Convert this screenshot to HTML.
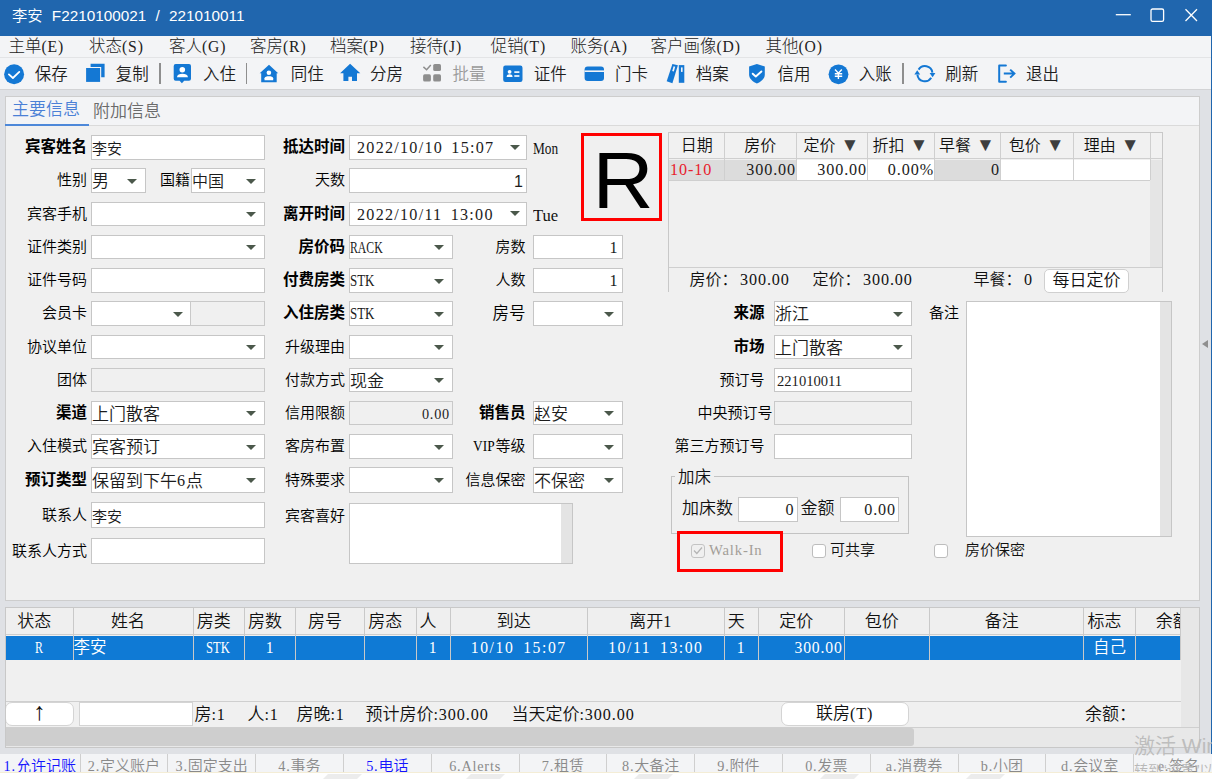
<!DOCTYPE html>
<html lang="zh-CN"><head><meta charset="utf-8"><title>李安 F2210100021 / 221010011</title>
<style>
*{box-sizing:border-box;margin:0;padding:0}
html,body{width:1212px;height:779px;overflow:hidden;background:#fff}
body{font-family:"Liberation Sans","Noto Sans CJK SC",sans-serif;color:#111;}
#w{font-weight:350;position:relative;width:1212px;height:779px;overflow:hidden;background:#dfe1e5}
#w div,#w span.a,#w svg{position:absolute}
.m{display:inline-block;font-family:"Liberation Serif","Noto Serif CJK SC",serif;white-space:nowrap;text-align:left;transform-origin:0 50%;vertical-align:baseline}
.n{font-family:"Liberation Serif","Noto Serif CJK SC",serif;font-size:.95em;letter-spacing:.055em}
.i .n,.i .m{position:relative;top:-1px}
.t{white-space:nowrap}
.l{white-space:nowrap;text-align:right;font-size:15px;line-height:24px;height:24px;color:#000}
.b{font-weight:700;font-size:15.5px !important}
.i{background:#fff;border:1px solid #c6c6c6;font-size:17px;line-height:22px;white-space:nowrap;overflow:hidden;padding-left:0;color:#1c1c1c}
.i.d{background:#f0f0f0;border-color:#c9c9c9}
.i.r{text-align:right;padding-right:2px}
.ar{width:0;height:0;border-left:5.5px solid transparent;border-right:5.5px solid transparent;border-top:5.6px solid #4b584b}
.mn{top:36px;height:22px;line-height:21px;font-size:16.5px;white-space:nowrap;color:#222;font-weight:300}
.tb{top:62px;height:24px;line-height:24px;font-size:16.5px;white-space:nowrap;color:#1e1e1e;font-weight:350}
.sep{top:63px;width:1.5px;height:21px;background:#8e8e8e}
.h{top:0;height:26px;line-height:26px;text-align:center;white-space:nowrap}
.c{top:0;height:24px;line-height:24px;white-space:nowrap;overflow:hidden}
.vs{top:0;width:1px;background:#cfcfcf}
.bt{top:753.5px;height:18px;width:88px;background:#f3f4f6;border-left:1px solid #cfcfcf;font-size:15px;line-height:23px;text-align:center;color:#8a8a8a;overflow:hidden;white-space:nowrap}
.cb{width:14px;height:14px;background:#fff;border:1px solid #bdbdbd;border-radius:3px}
</style></head>
<body><div id="w">
<div style="left:0;top:0;width:1212px;height:36px;background:#2066ae"></div>
<div class="t" style="left:12px;top:0;height:32px;line-height:32px;font-size:15.3px;word-spacing:5px;color:#fff">李安 F2210100021 / 221010011</div>
<svg style="left:1110px;top:4px" width="96" height="24" viewBox="0 0 96 24" fill="none" stroke="#fff" stroke-width="1.3"><path d="M5.8 10.7H20.8"/><rect x="41" y="5" width="12.6" height="12.4" rx="1.6"/><path d="M75.5 5.3L87 17M87 5.3L75.5 17"/></svg>
<div style="left:0;top:36px;width:1212px;height:22px;background:#f3f4f6;border-bottom:1px solid #e3e4e6"></div>
<div class="mn" style="left:8.5px">主单<span class="n">(E)</span></div>
<div class="mn" style="left:89px">状态<span class="n">(S)</span></div>
<div class="mn" style="left:169px">客人<span class="n">(G)</span></div>
<div class="mn" style="left:250px">客房<span class="n">(R)</span></div>
<div class="mn" style="left:330px">档案<span class="n">(P)</span></div>
<div class="mn" style="left:410px">接待<span class="n">(J)</span></div>
<div class="mn" style="left:490.5px">促销<span class="n">(T)</span></div>
<div class="mn" style="left:570.5px">账务<span class="n">(A)</span></div>
<div class="mn" style="left:650.5px">客户画像<span class="n">(D)</span></div>
<div class="mn" style="left:765.5px">其他<span class="n">(O)</span></div>
<div style="left:0;top:58px;width:1212px;height:32px;background:#f3f4f6;border-bottom:1.5px solid #d2d3d5"></div>
<div class="tb" style="left:34.7px">保存</div>
<div class="tb" style="left:115.8px">复制</div>
<div class="tb" style="left:203px">入住</div>
<div class="tb" style="left:290.8px">同住</div>
<div class="tb" style="left:370px">分房</div>
<div class="tb" style="left:452.5px;color:#9a9a9a">批量</div>
<div class="tb" style="left:533.7px">证件</div>
<div class="tb" style="left:615px">门卡</div>
<div class="tb" style="left:695.8px">档案</div>
<div class="tb" style="left:777.5px">信用</div>
<div class="tb" style="left:858.7px">入账</div>
<div class="tb" style="left:945.3px">刷新</div>
<div class="tb" style="left:1026px">退出</div>
<div class="sep" style="left:159px"></div>
<div class="sep" style="left:245.5px"></div>
<div class="sep" style="left:902px"></div>
<svg style="left:0;top:58px" width="1212" height="31" viewBox="0 58 1212 31" fill="#1478d4">
<circle cx="14.1" cy="74.2" r="10"/><path d="M8.9 74.4L12.9 78L19.3 71.9" fill="none" stroke="#fff" stroke-width="1.8" stroke-linecap="round" stroke-linejoin="round"/>
<path d="M90.6 63.7H104.6V77.3H101.2V66.9H90.6Z"/><rect x="86.1" y="68" width="14" height="13.9"/>
<path d="M175.7 64H189a2 2 0 0 1 2 2V78.8a2 2 0 0 1 -2 2H184.2L181.9 83.3L179.6 80.8H175.7a2 2 0 0 1 -2 -2V66a2 2 0 0 1 2 -2Z"/><circle cx="182.3" cy="69.7" r="2.8" fill="#fff"/><path d="M176.9 77.2C177.3 74.6 179.6 73.8 182.4 73.8S187.6 74.6 188 77.2Z" fill="#fff"/>
<path d="M269 64.8L278.2 73.3H276.7V82.3H261.2V73.3H259.7Z"/><circle cx="268.9" cy="72.7" r="2.3" fill="#fff"/><path d="M264.5 80.2V78.3C264.8 76.6 266.6 76.2 268.9 76.2S273 76.6 273.2 78.3V80.2Z" fill="#fff"/>
<path d="M350.1 63.8L360.3 73.3H357V81H352V76.8H348.4V81H343.4V73.3H340.1Z"/>
<g fill="#8e8e8e"><rect x="433.2" y="64" width="7.8" height="7" rx="1.6"/><rect x="423.1" y="74.3" width="7.8" height="7.3" rx="1.6"/><rect x="433.2" y="74.3" width="7.8" height="7.3" rx="1.6"/><path d="M423.4 66.9L426.6 69.8L430.8 65.1" fill="none" stroke="#8e8e8e" stroke-width="1.5"/></g>
<rect x="503.2" y="65.5" width="19.3" height="16.5" rx="2.2"/><circle cx="509.6" cy="71.8" r="1.9" fill="#fff"/><path d="M506.6 76.9C506.8 74.9 508 74.3 509.6 74.3S512.4 74.9 512.6 76.9Z" fill="#fff"/><rect x="514.3" y="71.3" width="5.1" height="1.6" fill="#fff"/><rect x="514.3" y="75.2" width="5.1" height="1.6" fill="#fff"/>
<rect x="584.6" y="66.4" width="19.4" height="14.6" rx="3"/><rect x="584.6" y="70.4" width="19.4" height="1.6" fill="#f3f4f6"/>
<path d="M672.4 64.1L677.9 65.2L672.4 83.2L666.7 81.3Z"/><path d="M673.6 66.3L675.2 66.7L673.8 71.4L672.2 71Z" fill="#f3f4f6"/><rect x="678.8" y="65.1" width="5.5" height="17.7"/><rect x="681" y="67.4" width="1.6" height="4.5" fill="#f3f4f6"/>
<path d="M756.9 64L764.8 66.4V74.5C764.8 78.6 761.2 81.7 756.9 83.6C752.6 81.7 749.1 78.6 749.1 74.5V66.4Z"/><path d="M752.7 73.7L755.8 76.5L761.4 71.5" fill="none" stroke="#fff" stroke-width="1.9" stroke-linecap="round" stroke-linejoin="round"/>
<circle cx="838.5" cy="74.3" r="9.9"/><path d="M835 69.6L838.4 73.2L841.8 69.6M838.4 73V79M834.8 73.7H842.2M834.8 76.2H842.2" fill="none" stroke="#fff" stroke-width="1.4"/>
<g fill="none" stroke="#1478d4" stroke-width="2"><path d="M918.6 69.6A7.5 7.5 0 0 1 932.4 72.6"/><path d="M931.2 77.8A7.5 7.5 0 0 1 917.4 74.6"/></g><path d="M929.6 73H935.4L932.6 77.2Z"/><path d="M914.4 74.4H920.2L917.2 70.2Z"/>
<g fill="none" stroke="#1478d4" stroke-width="2"><path d="M1005.9 65.5H999.2V81.8H1005.9" stroke-linejoin="round" stroke-linecap="round"/><path d="M1003.8 73.6H1014M1010.2 69.6L1014.4 73.6L1010.2 77.6"/></g>
</svg>
<div style="left:1210.6px;top:0;width:1.4px;height:772px;background:#2066ae"></div>
<div style="left:1202px;top:340px;width:0;height:0;border-top:4px solid transparent;border-bottom:4px solid transparent;border-right:6px solid #8f8f8f"></div>
<div style="left:5px;top:95.5px;width:1195px;height:505.5px;background:#f0f0f0;border:1px solid #cdcdcd"></div>
<div style="left:6px;top:97px;width:1193px;height:29px;background:#f3f4f6;border-bottom:1px solid #dadada"></div>
<div class="t" style="left:12px;top:97px;height:26px;line-height:25px;font-size:17px;color:#4a80d6">主要信息</div>
<div style="left:5px;top:124px;width:84px;height:1.7px;background:#4d88d9"></div>
<div class="t" style="left:93px;top:99px;height:26px;line-height:25px;font-size:17px;color:#6a6a6a">附加信息</div>
<div class="l b" style="right:1125px;top:135px;font-size:15px;line-height:24px;height:24px">宾客姓名</div>
<div class="i " style="left:91px;top:135px;width:174px;height:24.6px;line-height:25.6px;font-size:15px">李安</div>
<div class="l" style="right:1125px;top:168px;font-size:15px;line-height:24px;height:24px">性别</div>
<div class="i " style="left:91px;top:168px;width:54.7px;height:24.6px;line-height:25.6px;">男</div>
<div class="ar" style="left:126.69999999999999px;top:178.5px"></div>
<div class="l" style="right:1022px;top:168px;font-size:15px;line-height:24px;height:24px">国籍</div>
<div class="i " style="left:191px;top:168px;width:74px;height:24.6px;line-height:25.6px;font-size:16px">中国</div>
<div class="ar" style="left:246px;top:178.5px"></div>
<div class="l" style="right:1125px;top:201.5px;font-size:15px;line-height:24px;height:24px">宾客手机</div>
<div class="i " style="left:91px;top:201.5px;width:174px;height:24.6px;line-height:25.6px;"></div>
<div class="ar" style="left:246px;top:212.0px"></div>
<div class="l" style="right:1125px;top:234.5px;font-size:15px;line-height:24px;height:24px">证件类别</div>
<div class="i " style="left:91px;top:234.5px;width:174px;height:24.6px;line-height:25.6px;"></div>
<div class="ar" style="left:246px;top:245.0px"></div>
<div class="l" style="right:1125px;top:268px;font-size:15px;line-height:24px;height:24px">证件号码</div>
<div class="i " style="left:91px;top:268px;width:174px;height:24.6px;line-height:25.6px;"></div>
<div class="l" style="right:1125px;top:301px;font-size:15px;line-height:24px;height:24px">会员卡</div>
<div class="i " style="left:91px;top:301px;width:101px;height:24.6px;line-height:25.6px;"></div>
<div class="ar" style="left:173px;top:311.5px"></div>
<div class="i d" style="left:190px;top:301px;width:75px;height:24.6px;line-height:25.6px;"></div>
<div class="l" style="right:1125px;top:334.5px;font-size:15px;line-height:24px;height:24px">协议单位</div>
<div class="i " style="left:91px;top:334.5px;width:174px;height:24.6px;line-height:25.6px;"></div>
<div class="ar" style="left:246px;top:345.0px"></div>
<div class="l" style="right:1125px;top:367.5px;font-size:15px;line-height:24px;height:24px">团体</div>
<div class="i d" style="left:91px;top:367.5px;width:174px;height:24.6px;line-height:25.6px;"></div>
<div class="l b" style="right:1125px;top:400.5px;font-size:15px;line-height:24px;height:24px">渠道</div>
<div class="i " style="left:91px;top:400.5px;width:174px;height:24.6px;line-height:25.6px;">上门散客</div>
<div class="ar" style="left:246px;top:411.0px"></div>
<div class="l" style="right:1125px;top:434px;font-size:15px;line-height:24px;height:24px">入住模式</div>
<div class="i " style="left:91px;top:434px;width:174px;height:24.6px;line-height:25.6px;">宾客预订</div>
<div class="ar" style="left:246px;top:444.5px"></div>
<div class="l b" style="right:1125px;top:467px;font-size:15px;line-height:26px;height:26px">预订类型</div>
<div class="i " style="left:91px;top:467px;width:174px;height:26px;line-height:27px;">保留到下午<span class="n">6</span>点</div>
<div class="ar" style="left:246px;top:478.2px"></div>
<div class="l" style="right:1125px;top:502px;font-size:15px;line-height:26px;height:26px">联系人</div>
<div class="i " style="left:91px;top:502px;width:174px;height:26px;line-height:27px;font-size:15px">李安</div>
<div class="l" style="right:1125px;top:537.5px;font-size:15px;line-height:26px;height:26px">联系人方式</div>
<div class="i " style="left:91px;top:537.5px;width:174px;height:26px;line-height:27px;"></div>
<div class="l b" style="right:867px;top:135px;font-size:15px;line-height:24px;height:24px">抵达时间</div>
<div class="i " style="left:349px;top:135px;width:178px;height:24.6px;line-height:25.6px;padding-left:7px"><span class="n" style="letter-spacing:1.25px;word-spacing:3px">2022/10/10 15:07</span></div>
<div class="ar" style="left:509.5px;top:144.5px"></div>
<div class="t" style="left:532.5px;top:136px;height:24px;line-height:24px;font-size:17.5px"><span class="m" style="width:1.5em;transform:scaleX(0.762)">Mon</span></div>
<div class="l" style="right:867px;top:168px;font-size:15px;line-height:24px;height:24px">天数</div>
<div class="i r" style="left:349px;top:168px;width:178px;height:24.6px;line-height:25.6px;font-size:16px;padding-right:3px">1</div>
<div class="l b" style="right:867px;top:201.5px;font-size:15px;line-height:24px;height:24px">离开时间</div>
<div class="i " style="left:349px;top:201.5px;width:178px;height:24.6px;line-height:25.6px;padding-left:7px"><span class="n" style="letter-spacing:1.25px;word-spacing:3px">2022/10/11 13:00</span></div>
<div class="ar" style="left:509.5px;top:211.0px"></div>
<div class="t" style="left:532.5px;top:202.5px;height:24px;line-height:24px;font-size:17.5px"><span class="m" style="width:1.5em;transform:scaleX(0.948)">Tue</span></div>
<div class="l b" style="right:867px;top:234.5px;font-size:15px;line-height:24px;height:24px">房价码</div>
<div class="i " style="left:349px;top:234.5px;width:104px;height:24.6px;line-height:25.6px;"><span class="m" style="width:2.0em;transform:scaleX(0.691)">RACK</span></div>
<div class="ar" style="left:434px;top:245.0px"></div>
<div class="l b" style="right:867px;top:268px;font-size:15px;line-height:24px;height:24px">付费房类</div>
<div class="i " style="left:349px;top:268px;width:104px;height:24.6px;line-height:25.6px;"><span class="m" style="width:1.5em;transform:scaleX(0.762)">STK</span></div>
<div class="ar" style="left:434px;top:278.5px"></div>
<div class="l b" style="right:867px;top:301px;font-size:15px;line-height:24px;height:24px">入住房类</div>
<div class="i " style="left:349px;top:301px;width:104px;height:24.6px;line-height:25.6px;"><span class="m" style="width:1.5em;transform:scaleX(0.762)">STK</span></div>
<div class="ar" style="left:434px;top:311.5px"></div>
<div class="l" style="right:867px;top:334.5px;font-size:15px;line-height:24px;height:24px">升级理由</div>
<div class="i " style="left:349px;top:334.5px;width:104px;height:24.6px;line-height:25.6px;"></div>
<div class="ar" style="left:434px;top:345.0px"></div>
<div class="l" style="right:867px;top:367.5px;font-size:15px;line-height:24px;height:24px">付款方式</div>
<div class="i " style="left:349px;top:367.5px;width:104px;height:24.6px;line-height:25.6px;">现金</div>
<div class="ar" style="left:434px;top:378.0px"></div>
<div class="l" style="right:867px;top:400.5px;font-size:15px;line-height:24px;height:24px">信用限额</div>
<div class="i d r" style="left:349px;top:400.5px;width:104px;height:24.6px;line-height:25.6px;font-size:15px"><span class="n">0.00</span></div>
<div class="l" style="right:867px;top:434px;font-size:15px;line-height:24px;height:24px">客房布置</div>
<div class="i " style="left:349px;top:434px;width:104px;height:24.6px;line-height:25.6px;"></div>
<div class="ar" style="left:434px;top:444.5px"></div>
<div class="l" style="right:867px;top:467px;font-size:15px;line-height:26px;height:26px">特殊要求</div>
<div class="i " style="left:349px;top:467px;width:104px;height:26px;line-height:27px;"></div>
<div class="ar" style="left:434px;top:478.2px"></div>
<div class="l" style="right:867px;top:504px;font-size:15px;line-height:24px;height:24px">宾客喜好</div>
<div class="i" style="left:349px;top:502.5px;width:224px;height:61px"></div>
<div style="left:561px;top:503.5px;width:11px;height:59px;background:#e4e4e4"></div>
<div class="l" style="right:686.5px;top:234.5px;font-size:15px;line-height:24px;height:24px">房数</div>
<div class="i r" style="left:533px;top:234.5px;width:89.5px;height:24.6px;line-height:25.6px;padding-right:3px"><span class="n">1</span></div>
<div class="l" style="right:686.5px;top:268px;font-size:15px;line-height:24px;height:24px">人数</div>
<div class="i r" style="left:533px;top:268px;width:89.5px;height:24.6px;line-height:25.6px;padding-right:3px"><span class="n">1</span></div>
<div class="l" style="right:686.5px;top:301px;font-size:16.5px;line-height:24px;height:24px">房号</div>
<div class="i " style="left:533px;top:301px;width:89.5px;height:24.6px;line-height:25.6px;"></div>
<div class="ar" style="left:603.5px;top:311.5px"></div>
<div class="l b" style="right:686.5px;top:400.5px;font-size:15px;line-height:24px;height:24px">销售员</div>
<div class="i " style="left:533px;top:400.5px;width:89.5px;height:24.6px;line-height:25.6px;">赵安</div>
<div class="ar" style="left:603.5px;top:411.0px"></div>
<div class="l" style="right:686.5px;top:434px;font-size:15px;line-height:24px;height:24px"><span class="m" style="width:1.5em;transform:scaleX(0.894)">VIP</span>等级</div>
<div class="i " style="left:533px;top:434px;width:89.5px;height:24.6px;line-height:25.6px;"></div>
<div class="ar" style="left:603.5px;top:444.5px"></div>
<div class="l" style="right:686.5px;top:467px;font-size:15px;line-height:26px;height:26px">信息保密</div>
<div class="i " style="left:533px;top:467px;width:89.5px;height:26px;line-height:27px;">不保密</div>
<div class="ar" style="left:603.5px;top:478.2px"></div>
<div style="left:581px;top:133px;width:81px;height:88px;border:3px solid #ff0000"></div>
<div class="t" style="left:581px;top:133px;width:81px;height:88px;line-height:96px;text-align:center;font-size:79px;color:#000;padding-left:3px;transform:scaleX(1.07)">R</div>
<div style="left:668px;top:132px;width:495px;height:160px;border:1px solid #c8c8c8;border-bottom:none;background:#f0f0f0;font-size:17px" id="rt">
<div style="left:0;top:0;width:493px;height:26px;background:#f1f1f1;border-bottom:1px solid #cfcfcf"></div>
<div style="left:0;top:134px;width:493px;height:1px;background:#cfcfcf"></div>
<div style="left:481px;top:27px;width:12px;height:107px;background:#e5e5e5"></div>
<div class="h" style="left:0px;width:55.5px;font-size:16px">日期</div>
<div class="c" style="left:0px;top:26.5px;width:55.0px;height:20.5px;line-height:20px;background:#dcdcdc;text-align:left;color:#e8202c;padding-left:1px;"><span class="n">10-10</span></div>
<div class="vs" style="left:55.0px;height:47px"></div>
<div class="h" style="left:55.5px;width:71.5px;font-size:16px">房价</div>
<div class="c" style="left:56.0px;top:26.5px;width:71.0px;height:20.5px;line-height:20px;background:#dcdcdc;text-align:right;color:#1a1a1a;"><span class="n">300.00</span></div>
<div class="vs" style="left:126.5px;height:47px"></div>
<div class="h" style="left:127px;width:71px;font-size:16px">定价<span style="font-size:19px;color:#3e3e3e;margin-left:5px;line-height:20px;position:relative;top:-.5px">▼</span></div>
<div class="c" style="left:127.5px;top:26.5px;width:70.5px;height:20.5px;line-height:20px;background:#fff;text-align:right;color:#1a1a1a;"><span class="n">300.00</span></div>
<div class="vs" style="left:197.5px;height:47px"></div>
<div class="h" style="left:198px;width:67px;font-size:16px">折扣<span style="font-size:19px;color:#3e3e3e;margin-left:5px;line-height:20px;position:relative;top:-.5px">▼</span></div>
<div class="c" style="left:198.5px;top:26.5px;width:66.5px;height:20.5px;line-height:20px;background:#fff;text-align:right;color:#1a1a1a;"><span class="n">0.00%</span></div>
<div class="vs" style="left:264.5px;height:47px"></div>
<div class="h" style="left:265px;width:66px;font-size:16px">早餐<span style="font-size:19px;color:#3e3e3e;margin-left:5px;line-height:20px;position:relative;top:-.5px">▼</span></div>
<div class="c" style="left:265.5px;top:26.5px;width:65.5px;height:20.5px;line-height:20px;background:#dcdcdc;text-align:right;color:#1a1a1a;"><span class="n">0</span></div>
<div class="vs" style="left:330.5px;height:47px"></div>
<div class="h" style="left:331px;width:73.19999999999999px;font-size:16px">包价<span style="font-size:19px;color:#3e3e3e;margin-left:5px;line-height:20px;position:relative;top:-.5px">▼</span></div>
<div class="c" style="left:331.5px;top:26.5px;width:72.69999999999999px;height:20.5px;line-height:20px;background:#fff;text-align:right;color:#1a1a1a;"></div>
<div class="vs" style="left:403.7px;height:47px"></div>
<div class="h" style="left:404.2px;width:77.0px;font-size:16px">理由<span style="font-size:19px;color:#3e3e3e;margin-left:5px;line-height:20px;position:relative;top:-.5px">▼</span></div>
<div class="c" style="left:404.7px;top:26.5px;width:76.5px;height:20.5px;line-height:20px;background:#fff;text-align:right;color:#1a1a1a;"></div>
<div class="vs" style="left:480.7px;height:47px"></div>
<div style="left:0;top:47px;width:481px;height:1px;background:#cfcfcf"></div>
<div class="t" style="left:20.5px;top:135px;height:24px;line-height:24px"><span style="font-size:16px;margin-right:2.5px">房价：</span><span class="n">300.00</span></div>
<div class="t" style="left:143.5px;top:135px;height:24px;line-height:24px"><span style="font-size:16px;margin-right:2.5px">定价：</span><span class="n">300.00</span></div>
<div class="t" style="left:304.5px;top:135px;height:24px;line-height:24px"><span style="font-size:16px;margin-right:2.5px">早餐：</span><span class="n">0</span></div>
<div class="t" style="left:375px;top:135.5px;width:85px;height:24px;line-height:22px;background:#fff;border:1px solid #d0d0d0;border-radius:5px;text-align:center;font-size:17px">每日定价</div>
</div>
<div class="l b" style="right:447.5px;top:301px;font-size:15px;line-height:24px;height:24px">来源</div>
<div class="i " style="left:774px;top:301px;width:138px;height:24.6px;line-height:25.6px;">浙江</div>
<div class="ar" style="left:893px;top:311.5px"></div>
<div class="l b" style="right:447.5px;top:334.5px;font-size:15px;line-height:24px;height:24px">市场</div>
<div class="i " style="left:774px;top:334.5px;width:138px;height:24.6px;line-height:25.6px;">上门散客</div>
<div class="ar" style="left:893px;top:345.0px"></div>
<div class="l" style="right:447.5px;top:367.5px;font-size:15px;line-height:24px;height:24px">预订号</div>
<div class="i " style="left:774px;top:367.5px;width:138px;height:24.6px;line-height:25.6px;font-family:'Liberation Serif',serif;font-size:14.6px;padding-left:2px">221010011</div>
<div class="l" style="right:439.5px;top:400.5px;font-size:15px;line-height:24px;height:24px">中央预订号</div>
<div class="i d" style="left:774px;top:400.5px;width:138px;height:24.6px;line-height:25.6px;"></div>
<div class="l" style="right:447.5px;top:434px;font-size:15px;line-height:24px;height:24px">第三方预订号</div>
<div class="i " style="left:774px;top:434px;width:138px;height:24.6px;line-height:25.6px;"></div>
<div class="l" style="right:253px;top:301px;font-size:15px;line-height:24px;height:24px">备注</div>
<div class="i" style="left:966px;top:301px;width:206px;height:236px"></div>
<div style="left:1160px;top:302px;width:11px;height:234px;background:#e4e4e4"></div>
<div style="left:670.5px;top:475.5px;width:238px;height:58px;border:1px solid #c3c3c3"></div>
<div class="t" style="left:675px;top:465px;height:24px;line-height:24px;font-size:16.5px;background:#f0f0f0;padding:0 3px">加床</div>
<div class="t" style="left:682px;top:497px;height:24px;line-height:24px;font-size:17px">加床数</div>
<div class="i r" style="left:738px;top:497px;width:59.5px;height:24.6px;line-height:25.6px;"><span class="n">0</span></div>
<div class="t" style="left:800.5px;top:497px;height:24px;line-height:24px;font-size:17px">金额</div>
<div class="i r" style="left:839.5px;top:497px;width:59.5px;height:24.6px;line-height:25.6px;"><span class="n">0.00</span></div>
<div style="left:677px;top:531px;width:106px;height:40.5px;border:3px solid #ff0000"></div>
<div class="cb" style="left:690.5px;top:543.5px;background:#f0f0f0;border-color:#c4c4c4"></div>
<svg style="left:692.5px;top:546px" width="10" height="9" viewBox="0 0 10 9" fill="none" stroke="#b4b4b4" stroke-width="1.2"><path d="M1 4.5L3.8 7.5L9 1.5"/></svg>
<div class="t" style="left:709px;top:538px;height:24px;line-height:24px;font-size:15.5px;color:#a39e98"><span class="n">Walk-In</span></div>
<div class="cb" style="left:811.5px;top:543.5px"></div>
<div class="t" style="left:830px;top:538px;height:24px;line-height:24px;font-size:15px">可共享</div>
<div class="cb" style="left:933.5px;top:543.5px"></div>
<div class="t" style="left:965px;top:538px;height:24px;line-height:24px;font-size:15px">房价保密</div>
<div style="left:4.5px;top:606.5px;width:1195.5px;height:141px;border:1.5px solid #c8c8c8;background:#f0f0f0;font-size:17px;overflow:hidden" id="g">
<div style="left:0;top:0;width:1175px;height:27px;background:#efefef;border-bottom:1px solid #cdcdcd"></div>
<div style="left:0;top:28px;width:1175px;height:24px;background:#0f7ad5"></div>
<div class="h" style="left:0px;width:67.5px;height:27px;line-height:27px;overflow:hidden"><span style="position:relative;left:-5px">状态</span></div>
<div class="c" style="left:0.5px;top:28px;width:66.5px;color:#fff;text-align:center;font-size:16.5px;line-height:22.5px;"><span class="m" style="width:0.5em;transform:scaleX(0.720)">R</span></div>
<div class="vs" style="left:67.0px;height:52px;background:#c9c9c9"></div>
<div class="h" style="left:67.5px;width:120.0px;height:27px;line-height:27px;overflow:hidden"><span style="position:relative;left:-5px">姓名</span></div>
<div class="c" style="left:68.0px;top:28px;width:119.0px;color:#fff;text-align:left;font-size:16.5px;line-height:22.5px;">李安</div>
<div class="vs" style="left:187.0px;height:52px;background:#c9c9c9"></div>
<div class="h" style="left:187.5px;width:51.5px;height:27px;line-height:27px;overflow:hidden"><span style="position:relative;left:-5px">房类</span></div>
<div class="c" style="left:188.0px;top:28px;width:50.5px;color:#fff;text-align:center;font-size:16.5px;line-height:22.5px;"><span class="m" style="width:1.5em;transform:scaleX(0.762)">STK</span></div>
<div class="vs" style="left:238.5px;height:52px;background:#c9c9c9"></div>
<div class="h" style="left:239px;width:51px;height:27px;line-height:27px;overflow:hidden"><span style="position:relative;left:-5px">房数</span></div>
<div class="c" style="left:239.5px;top:28px;width:50px;color:#fff;text-align:center;font-size:16.5px;line-height:22.5px;"><span class="n">1</span></div>
<div class="vs" style="left:289.5px;height:52px;background:#c9c9c9"></div>
<div class="h" style="left:290px;width:69px;height:27px;line-height:27px;overflow:hidden"><span style="position:relative;left:-5px">房号</span></div>
<div class="vs" style="left:358.5px;height:52px;background:#c9c9c9"></div>
<div class="h" style="left:359px;width:51.5px;height:27px;line-height:27px;overflow:hidden"><span style="position:relative;left:-5px">房态</span></div>
<div class="vs" style="left:410.0px;height:52px;background:#c9c9c9"></div>
<div class="h" style="left:410.5px;width:34.0px;height:27px;line-height:27px;overflow:hidden"><span style="position:relative;left:-5px">人</span></div>
<div class="c" style="left:411.0px;top:28px;width:33.0px;color:#fff;text-align:center;font-size:16.5px;line-height:22.5px;"><span class="n">1</span></div>
<div class="vs" style="left:444.0px;height:52px;background:#c9c9c9"></div>
<div class="h" style="left:444.5px;width:137.5px;height:27px;line-height:27px;overflow:hidden"><span style="position:relative;left:-5px">到达</span></div>
<div class="c" style="left:445.0px;top:28px;width:136.5px;color:#fff;text-align:center;font-size:16.5px;line-height:22.5px;"><span class="n" style="letter-spacing:1.55px;word-spacing:3.5px">10/10 15:07</span></div>
<div class="vs" style="left:581.5px;height:52px;background:#c9c9c9"></div>
<div class="h" style="left:582px;width:136.70000000000005px;height:27px;line-height:27px;overflow:hidden"><span style="position:relative;left:-5px">离开<span class="n">1</span></span></div>
<div class="c" style="left:582.5px;top:28px;width:135.70000000000005px;color:#fff;text-align:center;font-size:16.5px;line-height:22.5px;"><span class="n" style="letter-spacing:1.55px;word-spacing:3.5px">10/11 13:00</span></div>
<div class="vs" style="left:718.2px;height:52px;background:#c9c9c9"></div>
<div class="h" style="left:718.7px;width:34.0px;height:27px;line-height:27px;overflow:hidden"><span style="position:relative;left:-5px">天</span></div>
<div class="c" style="left:719.2px;top:28px;width:33.0px;color:#fff;text-align:center;font-size:16.5px;line-height:22.5px;"><span class="n">1</span></div>
<div class="vs" style="left:752.2px;height:52px;background:#c9c9c9"></div>
<div class="h" style="left:752.7px;width:86.0px;height:27px;line-height:27px;overflow:hidden"><span style="position:relative;left:-5px">定价</span></div>
<div class="c" style="left:753.2px;top:28px;width:85.0px;color:#fff;text-align:right;font-size:16.5px;line-height:22.5px;padding-right:1px;"><span class="n">300.00</span></div>
<div class="vs" style="left:838.2px;height:52px;background:#c9c9c9"></div>
<div class="h" style="left:838.7px;width:85.29999999999995px;height:27px;line-height:27px;overflow:hidden"><span style="position:relative;left:-5px">包价</span></div>
<div class="vs" style="left:923.5px;height:52px;background:#c9c9c9"></div>
<div class="h" style="left:924px;width:154.29999999999995px;height:27px;line-height:27px;overflow:hidden"><span style="position:relative;left:-5px">备注</span></div>
<div class="vs" style="left:1077.8px;height:52px;background:#c9c9c9"></div>
<div class="h" style="left:1078.3px;width:51.40000000000009px;height:27px;line-height:27px;overflow:hidden"><span style="position:relative;left:-5px">标志</span></div>
<div class="c" style="left:1078.8px;top:28px;width:50.40000000000009px;color:#fff;text-align:center;font-size:16.5px;line-height:22.5px;">自己</div>
<div class="vs" style="left:1129.2px;height:52px;background:#c9c9c9"></div>
<div class="h" style="left:1129.7px;width:45.200000000000045px;height:27px;line-height:27px;overflow:hidden"><span style="position:relative;left:15px">余额</span></div>
<div class="vs" style="left:1174.4px;height:52px;background:#c9c9c9"></div>
<div style="left:1175px;top:0;width:18px;height:120px;background:#e7e7e7"></div>
<div style="left:0;top:93px;width:1175px;height:1px;background:#cfcfcf"></div>
<div style="left:0;top:119px;width:1193px;height:1px;background:#cfcfcf"></div>
<div style="left:-.5px;top:94.5px;width:68.5px;height:24px;line-height:22px;background:#fff;border:1px solid #d4d4d4;border-radius:7px;text-align:center;font-size:25px;line-height:17px">↑</div>
<div style="left:73px;top:94.5px;width:114.5px;height:24px;background:#fff;border:1px solid #d4d4d4"></div>
<div class="t" style="left:189px;top:94px;height:25px;line-height:25px">房<span class="n">:1</span></div>
<div class="t" style="left:242px;top:94px;height:25px;line-height:25px">人<span class="n">:1</span></div>
<div class="t" style="left:291px;top:94px;height:25px;line-height:25px">房晚<span class="n">:1</span></div>
<div class="t" style="left:360px;top:94px;height:25px;line-height:25px">预计房价<span class="n">:300.00</span></div>
<div class="t" style="left:506px;top:94px;height:25px;line-height:25px">当天定价<span class="n">:300.00</span></div>
<div style="left:775.5px;top:94.5px;width:127.5px;height:24px;line-height:22px;background:#fff;border:1px solid #d4d4d4;border-radius:7px;text-align:center;font-size:17px">联房<span class="n">(T)</span></div>
<div class="t" style="left:1079.5px;top:94px;height:25px;line-height:25px">余额：</div>
<div style="left:0;top:120px;width:1193px;height:19px;background:#e8e8e8"></div>
<div style="left:0;top:120px;width:908px;height:18px;background:#cecece;border-radius:0 3px 3px 0"></div>
</div>
<div style="left:0;top:753.5px;width:1211px;height:18px;background:#f3f4f6"></div>
<div class="bt" style="left:0px;width:79.5px;color:#1414ff;border-left:none"><span class="n">1.</span>允许记账</div>
<div class="bt" style="left:79.5px;width:87.8px"><span class="n">2.</span>定义账户</div>
<div class="bt" style="left:167.3px;width:87.8px"><span class="n">3.</span>固定支出</div>
<div class="bt" style="left:255.1px;width:87.8px"><span class="n">4.</span>事务</div>
<div class="bt" style="left:342.9px;width:87.8px;color:#1414ff"><span class="n">5.</span>电话</div>
<div class="bt" style="left:430.7px;width:87.8px"><span class="n">6.Alerts</span></div>
<div class="bt" style="left:518.5px;width:87.8px"><span class="n">7.</span>租赁</div>
<div class="bt" style="left:606.3px;width:87.8px"><span class="n">8.</span>大备注</div>
<div class="bt" style="left:694.1px;width:87.8px"><span class="n">9.</span>附件</div>
<div class="bt" style="left:781.9px;width:87.8px"><span class="n">0.</span>发票</div>
<div class="bt" style="left:869.7px;width:87.8px"><span class="n">a.</span>消费券</div>
<div class="bt" style="left:957.5px;width:87.8px"><span class="n">b.</span>小团</div>
<div class="bt" style="left:1045.3px;width:87.8px"><span class="n">d.</span>会议室</div>
<div class="bt" style="left:1133.1px;width:89.8px"><span class="n">e.</span>签名</div>
<div class="t" style="left:1134px;top:733px;font-size:21px;line-height:26px;color:#bdbdbd">激活 Windows</div>
<div class="t" style="left:1134px;top:760.5px;font-size:14px;line-height:18px;color:#b8b8b8">转到“设置”以激活 Windows。</div>
<div style="left:0;top:771.5px;width:1212px;height:8px;background:#fff;border-top:1.5px solid #f4edd6"></div>
<div style="left:325px;top:773.5px;width:34px;height:6px;background:#ececec;transform:skewX(-45deg)"></div>
<div style="left:468px;top:773.5px;width:34px;height:6px;background:#ececec;transform:skewX(-45deg)"></div>
<div style="left:636px;top:773.5px;width:34px;height:6px;background:#ececec;transform:skewX(-45deg)"></div>
<div style="left:822px;top:773.5px;width:34px;height:6px;background:#ececec;transform:skewX(-45deg)"></div>
<div style="left:968px;top:773.5px;width:34px;height:6px;background:#ececec;transform:skewX(-45deg)"></div>
</div></body></html>
